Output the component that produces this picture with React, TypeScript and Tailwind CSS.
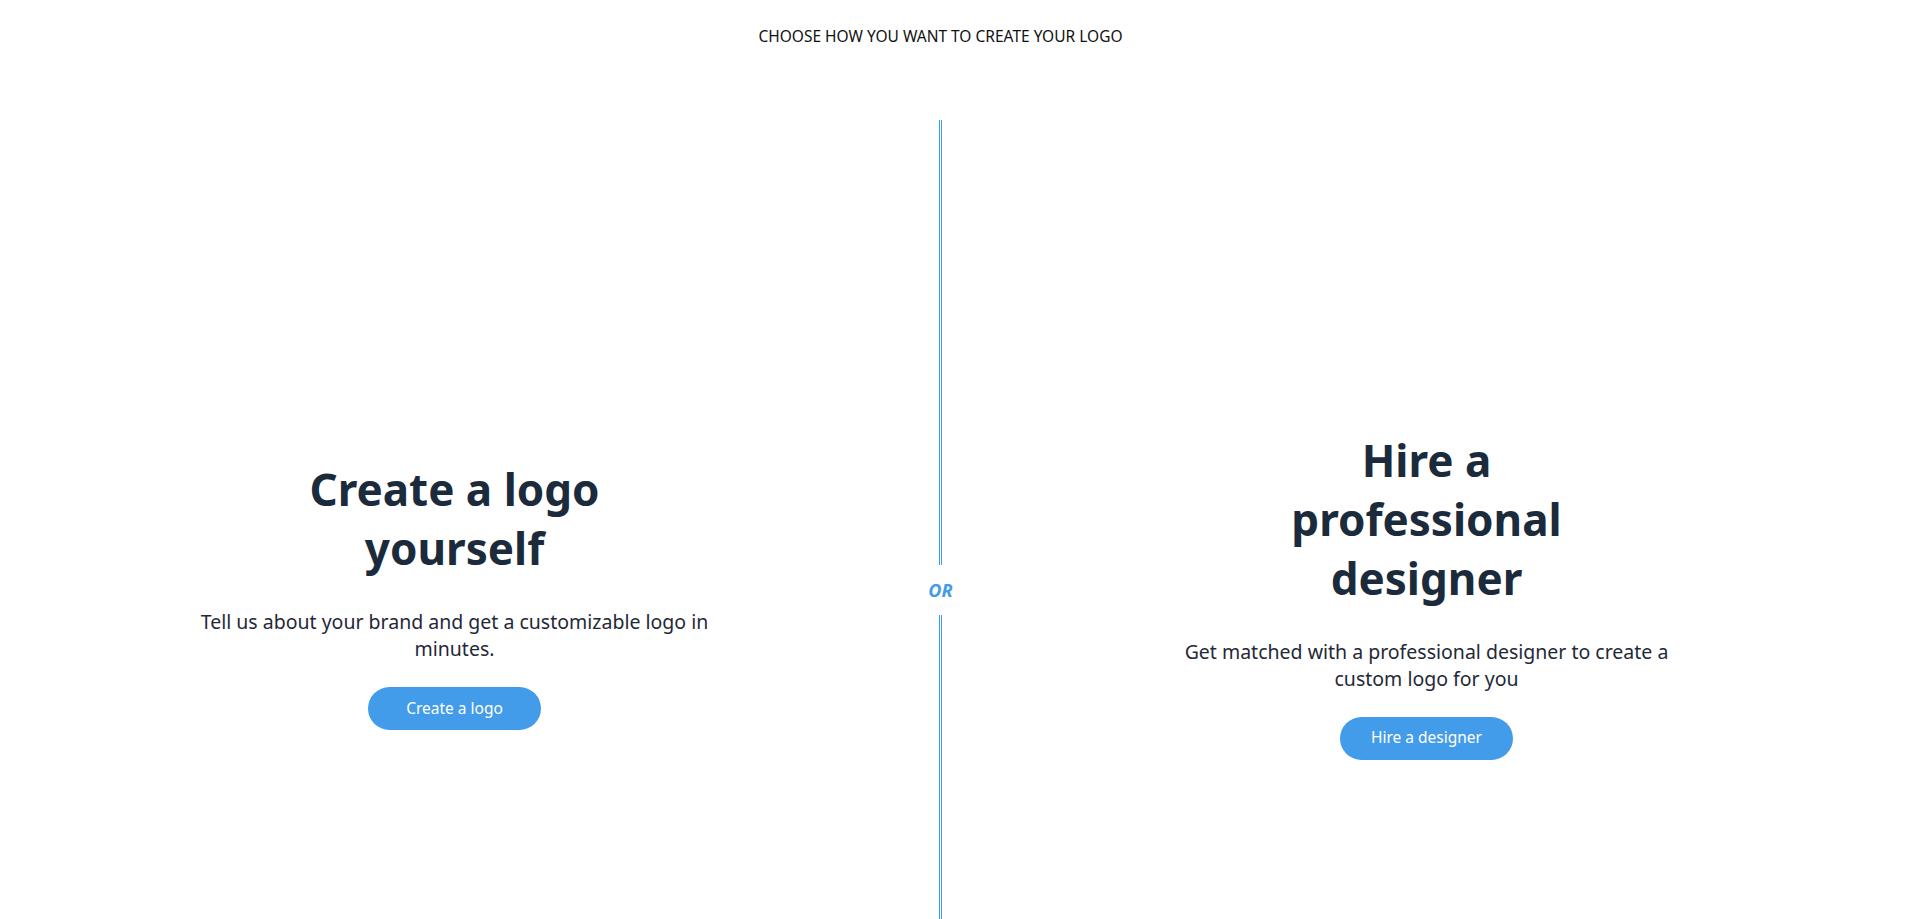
type ChoiceProps = {
  title: string;
  text: string;
  cta: string;
};

const Choice = ({ title, text, cta }: ChoiceProps) => {
  return (
    <div className="flex-1 mt-[10px] flex flex-col items-center text-center">
      <h2 className="max-w-[330px] text-[44px] leading-[59px] font-bold text-[#1b2b3c]">{title}</h2>
      <p className="mt-[30px] max-w-[530px] text-[19.5px] leading-[27px] text-[#1f2937]">{text}</p>
      <button className="mt-[25px] w-[173px] h-[43px] rounded-full bg-[#439cea] text-white text-[15.5px]">
        {cta}
      </button>
    </div>
  );
};

const Divider = () => {
  return (
    <div className="w-[63px] flex flex-col items-center">
      <div className="h-[445px] w-[3px] border-x border-[#3d9bf2]" />
      <div className="h-[50px] flex items-center justify-center text-[18px] font-bold italic text-[#439cea]">OR</div>
      <div className="h-[445px] w-[3px] border-x border-[#3d9bf2]" />
    </div>
  );
};

export default function App() {
  return (
    <div className="w-[1881px] min-h-[2100px] bg-white font-['Noto_Sans',sans-serif]">
      <p className="pt-[26px] text-center text-[15.5px] leading-[20px] text-[#111111]">
        CHOOSE HOW YOU WANT TO CREATE YOUR LOGO
      </p>
      <div className="mt-[74px] flex items-center">
        <Choice
          title="Create a logo yourself"
          text="Tell us about your brand and get a customizable logo in minutes."
          cta="Create a logo"
        />
        <Divider />
        <Choice
          title="Hire a professional designer"
          text="Get matched with a professional designer to create a custom logo for you"
          cta="Hire a designer"
        />
      </div>
    </div>
  );
}
